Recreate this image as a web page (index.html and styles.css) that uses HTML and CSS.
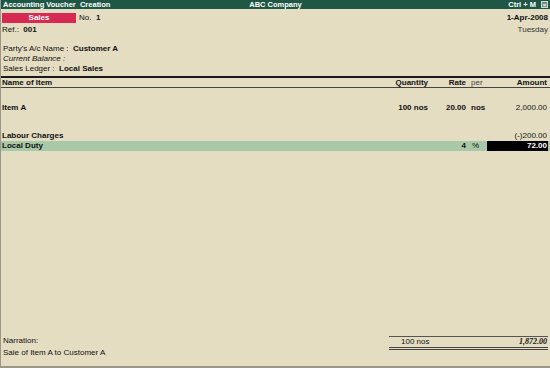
FILE: index.html
```html
<!DOCTYPE html>
<html>
<head>
<meta charset="utf-8">
<link rel="stylesheet" href="styles.css">
</head>
<body>
<div class="win">
  <div class="titlebar">
    <span class="t-left">Accounting Voucher&nbsp; Creation</span>
    <span class="t-mid">ABC Company</span>
    <span class="t-right">Ctrl + M <span class="xbox">×</span></span>
  </div>
  <div class="head">
    <div class="hrow">
      <div class="hleft"><span class="vtype">Sales</span><span class="no">No.&nbsp; <b>1</b></span></div>
      <b class="date">1-Apr-2008</b>
    </div>
    <div class="hrow">
      <span>Ref.:&nbsp; <b>001</b></span>
      <span class="day">Tuesday</span>
    </div>
  </div>
  <div class="party">
    <div class="line">Party's A/c Name :&nbsp; <b>Customer A</b></div>
    <div class="line"><i>Current Balance :</i></div>
    <div class="line">Sales Ledger :&nbsp; <b>Local Sales</b></div>
  </div>
  <div class="grid ghead">
    <b>Name of Item</b>
    <b class="r">Quantity</b>
    <b class="r">Rate</b>
    <span class="per">per</span>
    <b class="r">Amount</b>
  </div>
  <div class="body">
    <div class="grid row item">
      <b>Item A</b>
      <b class="r">100 nos</b>
      <b class="r">20.00</b>
      <b class="per">nos</b>
      <span class="r">2,000.00</span>
    </div>
    <div class="grid row labour">
      <b>Labour Charges</b>
      <span></span>
      <span></span>
      <span></span>
      <span class="r">(-)200.00</span>
    </div>
    <div class="grid row duty">
      <b>Local Duty</b>
      <span></span>
      <b class="r">4</b>
      <span class="per pct">%</span>
      <b class="r amt-sel">72.00</b>
    </div>
  </div>
  <div class="foot">
    <div class="narr">
      <div class="line">Narration:</div>
      <div class="line second">Sale of Item A to Customer A</div>
    </div>
    <div class="total">
      <span class="tq">100 nos</span>
      <b class="ta">1,872.00</b>
    </div>
  </div>
</div>
</body>
</html>
```
FILE: styles.css
```css
html, body {
  margin: 0;
  padding: 0;
}
body {
  width: 550px;
  height: 368px;
  overflow: hidden;
  font-family: "Liberation Sans", Arial, sans-serif;
  font-size: 8px;
  color: #111;
}
.win {
  box-sizing: border-box;
  width: 550px;
  height: 368px;
  background: #e4ddc2;
  border-left: 1px solid #9a968a;
  border-bottom: 2px solid #9a968a;
  display: flex;
  flex-direction: column;
}
b { font-weight: bold; }
.titlebar {
  height: 9px;
  background: #1e5746;
  color: #fff;
  font-weight: bold;
  font-size: 7.5px;
  display: grid;
  grid-template-columns: 1fr auto 1fr;
  align-items: center;
  line-height: 9px;
  padding: 0 2px 0 2px;
}
.t-mid { text-align: center; }
.t-right { text-align: right; display: flex; justify-content: flex-end; align-items: center; gap: 5px; }
.xbox {
  display: inline-block;
  width: 7px;
  height: 7px;
  border: 1px solid #cfd8d2;
  background: #6f8c82;
  color: #fff;
  font-size: 6px;
  line-height: 6px;
  text-align: center;
  box-sizing: border-box;
}
.head {
  padding: 3px 2px 0 1px;
}
.hrow {
  display: flex;
  justify-content: space-between;
  align-items: center;
  height: 11px;
}
.hrow + .hrow { height: 12px; }
.hleft { display: flex; align-items: center; }
.vtype {
  display: inline-block;
  width: 74px;
  height: 10px;
  line-height: 10px;
  background: #d62a52;
  color: #fff;
  font-weight: bold;
  text-align: center;
  margin-right: 3px;
}
.day { color: #333; }
.party {
  margin-top: 9px;
  padding-left: 2px;
}
.line {
  height: 10px;
  line-height: 10px;
}
.grid {
  display: grid;
  grid-template-columns: 1fr 50px 38px 20px 61px;
  padding: 0 2px 0 1px;
  align-items: center;
}
.r { text-align: right; padding-right: 1px; }
.per { padding-left: 4px; }
.ghead {
  margin-top: 2px;
  border-top: 2px solid #1a1a1a;
  border-bottom: 1px solid #444;
  height: 9px;
  line-height: 9px;
}
.ghead .per { color: #444; }
.body { flex: 1; }
.row { height: 10px; line-height: 10px; }
.item { margin-top: 15px; }
.labour { margin-top: 18px; }
.duty { background: #a8c9a8; }
.amt-sel {
  background: #000;
  color: #fff;
  height: 10px;
}
.pct { padding-left: 5px; }
.foot {
  display: flex;
  justify-content: space-between;
  align-items: flex-start;
  padding: 0 2px 0 2px;
  height: 30px;
}
.narr .second { margin-top: 2px; }
.total {
  width: 147px;
  border-top: 1px solid #555;
  border-bottom: 3px double #444;
  display: flex;
  justify-content: space-between;
  height: 10px;
  line-height: 10px;
  padding-left: 12px;
  box-sizing: content-box;
}
.ta { font-style: italic; font-family: "Liberation Serif", serif; padding-right: 1px; }
```
